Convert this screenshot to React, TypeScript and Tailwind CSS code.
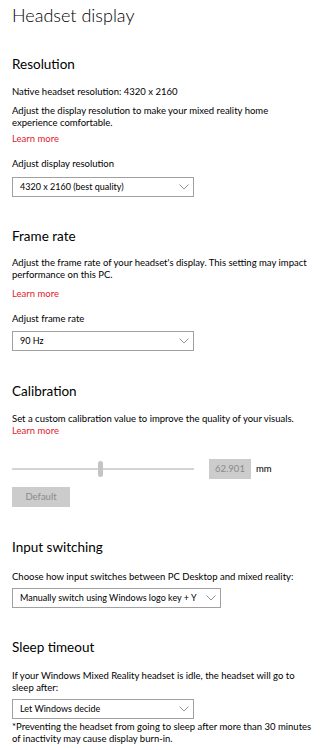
const Chevron = () => (
  <svg width="10" height="6" viewBox="0 0 10 6" fill="none" stroke="#888" strokeWidth="0.9">
    <polyline points="0.5,0.5 5,5 9.5,0.5" />
  </svg>
);

function Select({ value, width }: { value: string; width: string }) {
  return (
    <div className={`${width} h-[20px] border-[1.5px] border-[#a0a0a0] flex items-center justify-between pl-[7px] pr-[4px] bg-white`}>
      <span className="text-[9px] text-black whitespace-nowrap">{value}</span>
      <Chevron />
    </div>
  );
}

const LearnMore = () => <div className="text-[9.5px] text-[#e3202e]">Learn more</div>;

export default function App() {
  return (
    <div className="w-[328px] h-[750px] bg-white text-black pl-[12px] overflow-hidden" style={{ fontFamily: 'Lato, "Open Sans", sans-serif' }}>
      <h1 className="text-[18px] font-light leading-[26px] pt-[2px]">Headset display</h1>

      <h2 className="text-[13.5px] leading-[20px] mt-[26px]">Resolution</h2>
      <div className="text-[9.5px] leading-[12px] mt-[12px]">Native headset resolution: 4320 x 2160</div>
      <div className="text-[9.5px] leading-[12px] mt-[7px] w-[260px]">Adjust the display resolution to make your mixed reality home experience comfortable.</div>
      <div className="mt-[4px] leading-[12px]"><LearnMore /></div>
      <div className="text-[9.5px] leading-[12px] mt-[13px]">Adjust display resolution</div>
      <div className="mt-[7px]"><Select value="4320 x 2160 (best quality)" width="w-[182px]" /></div>

      <h2 className="text-[13.5px] leading-[20px] mt-[29px]">Frame rate</h2>
      <div className="text-[9.5px] leading-[12px] mt-[11px] w-[300px]">Adjust the frame rate of your headset's display. This setting may impact performance on this PC.</div>
      <div className="mt-[7px] leading-[12px]"><LearnMore /></div>
      <div className="text-[9.5px] leading-[12px] mt-[13px]">Adjust frame rate</div>
      <div className="mt-[6px]"><Select value="90 Hz" width="w-[182px]" /></div>

      <h2 className="text-[13.5px] leading-[20px] mt-[30px]">Calibration</h2>
      <div className="text-[9.5px] leading-[12px] mt-[12px]">Set a custom calibration value to improve the quality of your visuals.</div>
      <div className="leading-[12px]"><LearnMore /></div>
      <div className="flex items-center mt-[22px] h-[20px]">
        <div className="relative w-[182px] h-[2px] bg-[#d4d4d4]">
          <div className="absolute left-[86px] top-[-7px] w-[5px] h-[16px] rounded-full bg-[#c4c4c4]" />
        </div>
        <div className="ml-[15px] w-[42px] h-[20px] bg-[#cccccc] text-[#8a8a8a] text-[9.5px] flex items-center justify-center">62.901</div>
        <span className="ml-[5px] text-[9.5px]">mm</span>
      </div>
      <div className="mt-[8px] w-[58px] h-[20px] bg-[#cccccc] text-[#8a8a8a] text-[9.5px] flex items-center justify-center">Default</div>

      <h2 className="text-[13.5px] leading-[20px] mt-[30px]">Input switching</h2>
      <div className="text-[9.5px] leading-[12px] mt-[14px]">Choose how input switches between PC Desktop and mixed reality:</div>
      <div className="mt-[5px]"><Select value="Manually switch using Windows logo key + Y" width="w-[209px]" /></div>

      <h2 className="text-[13.5px] leading-[20px] mt-[29px]">Sleep timeout</h2>
      <div className="text-[9.5px] leading-[12px] mt-[13px] w-[290px]">If your Windows Mixed Reality headset is idle, the headset will go to sleep after:</div>
      <div className="mt-[5px]"><Select value="Let Windows decide" width="w-[182px]" /></div>
      <div className="text-[9.5px] leading-[12px] mt-[2px] w-[300px]">*Preventing the headset from going to sleep after more than 30 minutes of inactivity may cause display burn-in.</div>
    </div>
  );
}
